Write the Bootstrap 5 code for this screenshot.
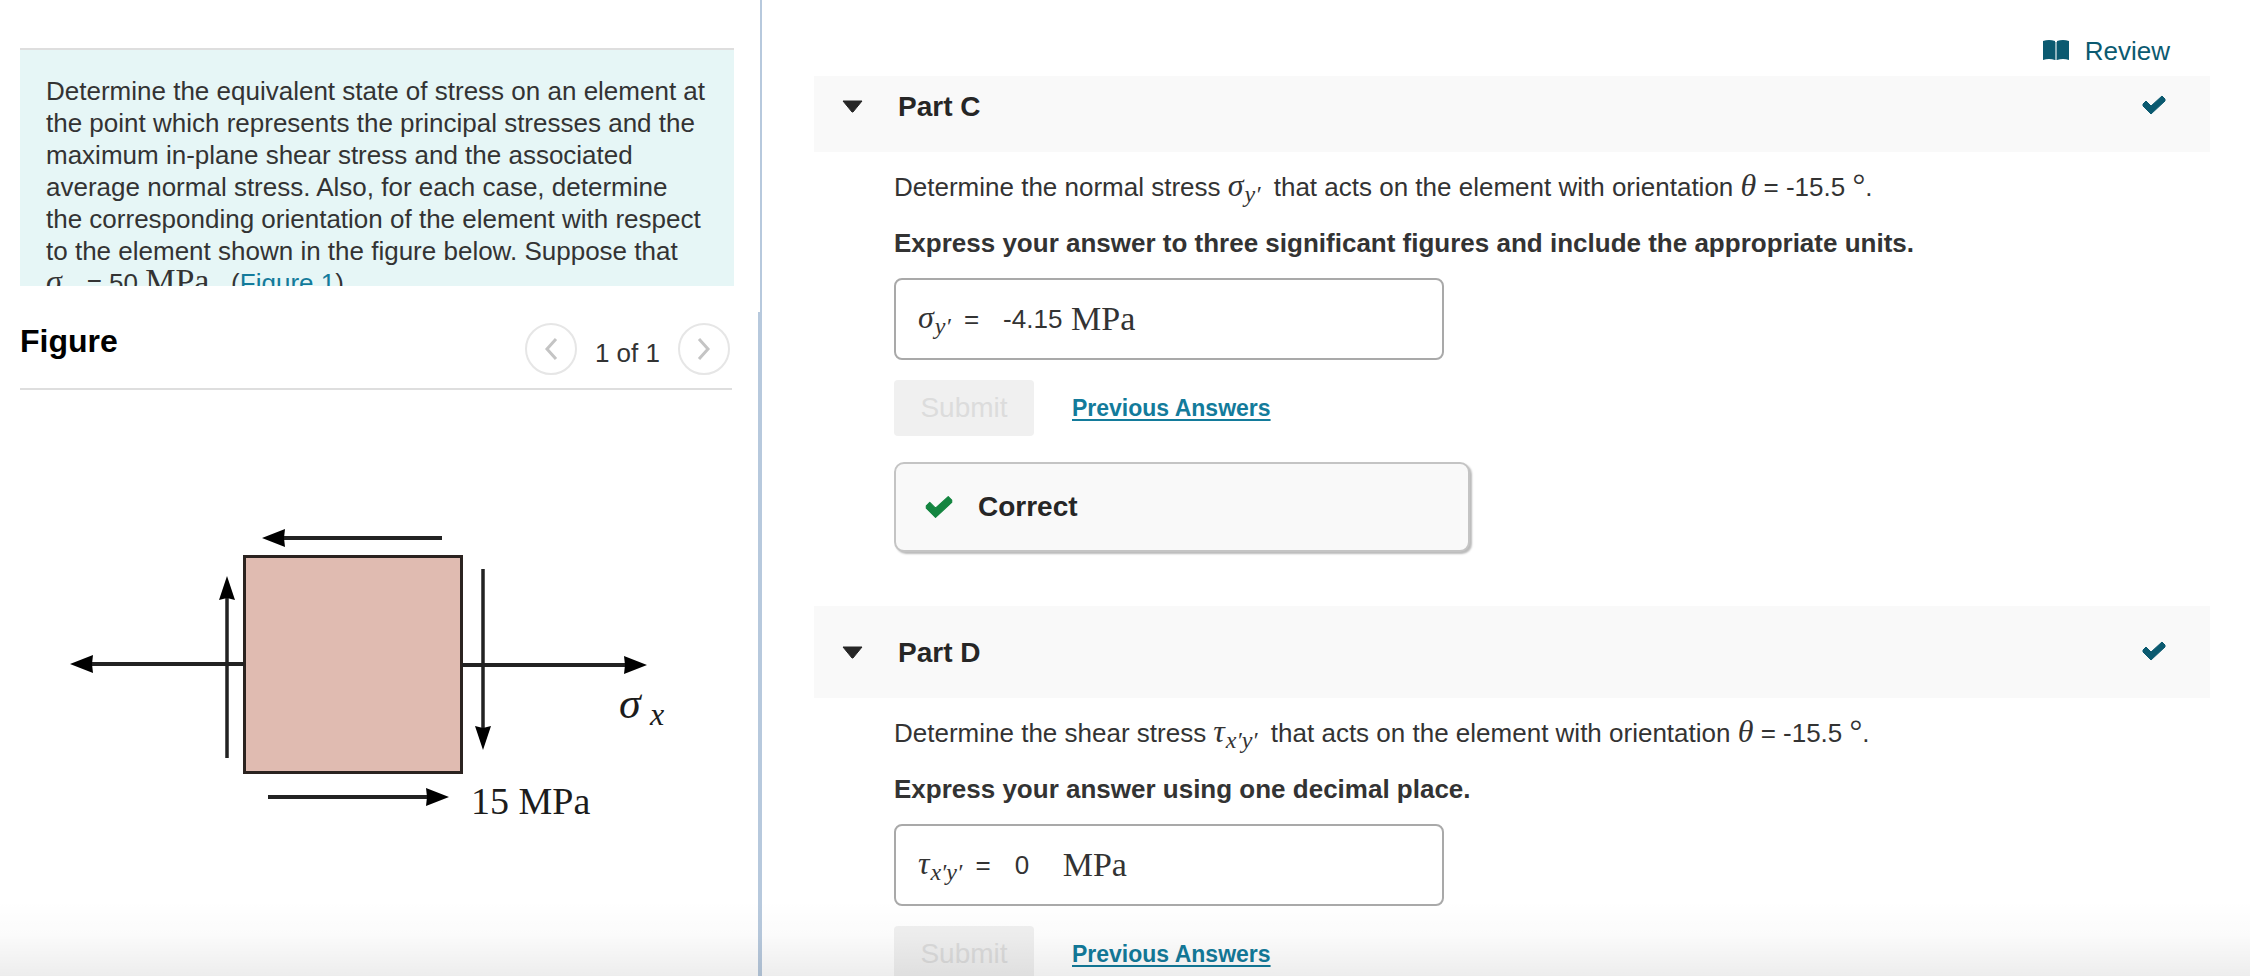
<!DOCTYPE html>
<html lang="en">
<head>
<meta charset="utf-8">
<meta name="viewport" content="width=device-width, initial-scale=1">
<title>Stress transformation problem</title>
<link href="https://cdn.jsdelivr.net/npm/bootstrap@5.3.0/dist/css/bootstrap.min.css" rel="stylesheet">
<style>
  :root { --ink: #333; --teal: #0b5a70; --link: #137b9b; --rule: #dedede; --divider: #b7c9dd; }
  body { font-family: "Liberation Sans", Arial, sans-serif; font-size: 26px; line-height: 32px; color: var(--ink); }
  .workspace { height: 100vh; overflow: hidden; }
  .problem-pane { width: 762px; }
  .statement-wrap { padding: 48px 26px 26px 20px; border-right: 2px solid var(--divider); }
  .statement { background: #e6f6f6; border-top: 2px solid var(--rule); height: 238px; overflow: hidden; padding: 25px 24px 0 26px; }
  .figure-wrap { border-right: 4px solid var(--divider); padding: 0 26px 0 20px; }
  .figure-head { height: 78px; border-bottom: 2px solid var(--rule); padding: 11px 2px 0 0; }
  .figure-head h2 { font-size: 32px; line-height: 36px; font-weight: 700; color: #000; }
  .pager { width: 52px; height: 52px; border: 2px solid #e6e6e6; border-radius: 50%; background: #fff; }
  .page-count { padding: 6px 18px 0; }
  .diagram { width: 100%; max-width: 712px; height: auto; }
  .diagram text { font-family: "Liberation Serif", serif; font-size: 38px; fill: #1c1c1c; }
  .diagram .sym { font-size: 44px; font-style: italic; }
  .diagram .sym-low { font-size: 32px; font-style: italic; }
  .math, .unit { font-family: "Liberation Serif", "Times New Roman", serif; font-size: 32px; line-height: 1px; }
  .math .low { font-size: 24px; position: relative; top: 6px; font-style: italic; padding: 0 6px 0 1px; }
  .unit { font-size: 34px; }
  .answer-box .unit { padding-bottom: 2px; }
  .answers-pane { min-width: 0; padding: 35px 40px 0 52px; }
  .review { color: var(--teal); height: 41px; padding-right: 40px; gap: 16px; }
  a { color: var(--link); text-decoration: none; }
  .part-head { background: #f9f9f9; height: 92px; padding: 31px 43px 0 28px; }
  .part-head.tucked { height: 76px; padding-top: 15px; }
  .part-head h2 { font-size: 28px; line-height: 32px; font-weight: 700; color: #262626; margin-left: 35px; }
  .part-body { padding: 19px 0 0 80px; }
  .part-body p { margin-bottom: 24px; }
  .part-body .instruction { margin-bottom: 19px; }
  .answer-box { max-width: 550px; height: 82px; border: 2px solid #a9a9a9; border-radius: 8px; background: #fff; padding: 0 22px; }
  .answer-box input { border: 0; padding: 0; background: transparent; color: inherit; width: 64px; }
  .answer-box input.short { width: 48px; }
  .btn-submit { width: 140px; height: 56px; font-size: 28px; border: 0; border-radius: 4px; background: #f0f0f0; color: #dcdcdc; }
  .prev-link { font-size: 23px; font-weight: 700; text-decoration: underline; text-decoration-thickness: 2px; text-underline-offset: 3px; margin-left: 38px; }
  .result { max-width: 576px; height: 90px; background: #f9f9f9; border: 2px solid #c4c4c4; border-radius: 10px; box-shadow: 2px 2px 2px #bbb; padding: 0 28px; font-size: 28px; font-weight: 700; color: #262626; gap: 24px; margin: 26px 0 54px; }
  .fade-edge { height: 76px; background: linear-gradient(rgba(0,0,0,0), rgba(0,0,0,.015) 45%, rgba(0,0,0,.07)); pointer-events: none; }
</style>
</head>
<body>
<div class="workspace d-flex position-relative">
  <aside class="problem-pane d-flex flex-column flex-shrink-0">
    <div class="statement-wrap">
      <div class="statement">Determine the equivalent state of stress on an element at the point which represents the principal stresses and the maximum in-plane shear stress and the associated average normal stress. Also, for each case, determine the corresponding orientation of the element with respect to the element shown in the figure below. Suppose that <span class="math"><i>σ</i><span class="low">x</span></span> = 50 <span class="unit">MPa</span> . (<a href="#figure">Figure 1</a>)</div>
    </div>
    <section class="figure-wrap flex-grow-1" id="figure">
      <div class="figure-head d-flex justify-content-between">
        <h2 class="mb-0">Figure</h2>
        <div class="d-flex align-items-start">
          <button class="pager d-flex align-items-center justify-content-center p-0" type="button" aria-label="Previous figure"><svg width="14" height="24" fill="none" stroke="#c4c4c4" stroke-width="3"><path d="M12 2 3 12 12 22"/></svg></button>
          <span class="page-count mt-2">1 of 1</span>
          <button class="pager d-flex align-items-center justify-content-center p-0" type="button" aria-label="Next figure"><svg width="14" height="24" fill="none" stroke="#c4c4c4" stroke-width="3"><path d="M2 2 11 12 2 22"/></svg></button>
        </div>
      </div>
      <svg class="diagram d-block" viewBox="20 390 712 460" role="img" aria-label="Stress element">
        <rect x="244.500" y="556.500" width="217" height="216" fill="#e0bbb1" stroke="#2b2320" stroke-width="3"/>
        <g stroke="#222" stroke-width="4"><path d="M283 538H442M92 664H244M462 665H626M268 797H428"/></g>
        <g stroke="#222" stroke-width="3.500"><path d="M227 758V598M483 569V728"/></g>
        <g fill="#000">
          <path d="M262 538 285 529 284 538 285 547z"/><path d="M70 664 93 655 92 664 93 673z"/>
          <path d="M647 665 624 656 625 665 624 674z"/><path d="M449 797 426 788 427 797 426 806z"/>
          <path d="M227 576 219 600 227 598 235 600z"/><path d="M483 750 475 726 483 728 491 726z"/>
        </g>
        <text x="471" y="814">15 MPa</text>
        <text class="sym" x="619" y="718">σ</text><text class="sym-low" x="650" y="725">x</text>
      </svg>
    </section>
  </aside>

  <main class="answers-pane flex-grow-1">
    <div class="d-flex justify-content-end">
      <a class="review d-flex" href="#review"><svg class="mt-1" width="26" height="22" viewBox="0 0 26 22"><path d="M0 2Q6 0 12 2V21Q6 19 0 21zM14 2Q20 0 26 2V21Q20 19 14 21z" fill="#0b5a70"/><path d="M13 3V21" stroke="#8fb3bd" stroke-width="2"/></svg>Review</a>
    </div>
    <section>
      <div class="part-head tucked d-flex">
        <svg class="mt-2" width="21" height="14"><path d="M1 2H20L11 13H10z" fill="#262626" stroke="#262626" stroke-linejoin="round"/></svg>
        <h2>Part C</h2>
        <svg class="ms-auto mt-1" width="26" height="20" viewBox="0 0 26 20"><path d="M2 9 5 6 10 11 21 1 24 4V6L10 19 2 11z" fill="#0b5a70" stroke="#0b5a70" stroke-linejoin="round"/></svg>
      </div>
      <div class="part-body">
        <p>Determine the normal stress <span class="math"><i>σ</i><span class="low">y′</span></span> that acts on the element with orientation <i class="math">θ</i> = -15.5 <span class="math">°</span>.</p>
        <p class="instruction fw-bold">Express your answer to three significant figures and include the appropriate units.</p>
        <div class="answer-box d-flex align-items-center">
          <label for="ansC"><span class="math"><i>σ</i><span class="low">y′</span></span> =</label>
          <input class="ms-4 me-1" id="ansC" value="-4.15" readonly><span class="unit">MPa</span>
        </div>
        <div class="d-flex align-items-center mt-3 pt-1"><button class="btn-submit" type="button" disabled>Submit</button><a class="prev-link" href="#c">Previous Answers</a></div>
        <div class="result d-flex align-items-center">
          <svg width="30" height="24" viewBox="0 0 26 20"><path d="M2 9 5 6 10 11 21 1 24 4V6L10 19 2 11z" fill="#148540" stroke="#148540" stroke-linejoin="round"/></svg>Correct
        </div>
      </div>
    </section>
    <section>
      <div class="part-head d-flex">
        <svg class="mt-2" width="21" height="14"><path d="M1 2H20L11 13H10z" fill="#262626" stroke="#262626" stroke-linejoin="round"/></svg>
        <h2>Part D</h2>
        <svg class="ms-auto mt-1" width="26" height="20" viewBox="0 0 26 20"><path d="M2 9 5 6 10 11 21 1 24 4V6L10 19 2 11z" fill="#0b5a70" stroke="#0b5a70" stroke-linejoin="round"/></svg>
      </div>
      <div class="part-body">
        <p>Determine the shear stress <span class="math"><i>τ</i><span class="low">x′y′</span></span> that acts on the element with orientation <i class="math">θ</i> = -15.5 <span class="math">°</span>.</p>
        <p class="instruction fw-bold">Express your answer using one decimal place.</p>
        <div class="answer-box d-flex align-items-center">
          <label for="ansD"><span class="math"><i>τ</i><span class="low">x′y′</span></span> =</label>
          <input class="short ms-4" id="ansD" value="0" readonly><span class="unit">MPa</span>
        </div>
        <div class="d-flex align-items-center mt-3 pt-1"><button class="btn-submit" type="button" disabled>Submit</button><a class="prev-link" href="#d">Previous Answers</a></div>
      </div>
    </section>
  </main>
  <div class="fade-edge position-absolute bottom-0 start-0 w-100"></div>
</div>
<script src="https://cdn.jsdelivr.net/npm/bootstrap@5.3.0/dist/js/bootstrap.bundle.min.js"></script>
</body>
</html>
